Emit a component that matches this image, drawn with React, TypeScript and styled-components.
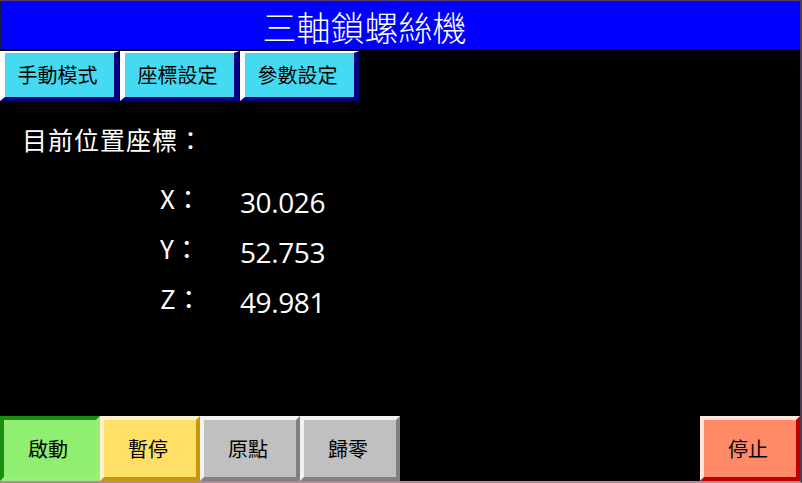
import React from "react";
import styled, { createGlobalStyle } from "styled-components";

const Global = createGlobalStyle`
  html, body { margin: 0; padding: 0; background: #000; }
  body { font-family: "Noto Sans CJK TC", "Noto Sans", sans-serif; }
`;

const CJK = `"Noto Sans CJK TC", "Noto Sans CJK SC", sans-serif`;

const Screen = styled.div`
  width: 802px;
  height: 483px;
  box-sizing: border-box;
  background: #000;
  border-top: 1px solid #5a3a60;
  border-right: 2px solid #4a3e4e;
  border-bottom: 2px solid #b48a98;
  display: flex;
  flex-direction: column;
  overflow: hidden;
`;

const Header = styled.header`
  height: 48px;
  background: #0000ff;
  color: #fff;
  font-family: ${CJK};
  font-size: 34px;
  font-weight: 300;
  line-height: 48px;
  text-align: center;
  padding: 2px 72px 0 0;
  box-sizing: border-box;
  margin-bottom: 2px;
  border-left: 1px solid #1a1a40;
`;

const TabRow = styled.nav`
  display: flex;
  gap: 1px;
  height: 50px;
`;

const Tab = styled.button`
  width: 119px;
  height: 50px;
  box-sizing: border-box;
  background: #44daf2;
  border-style: solid;
  border-width: 2px 5px 4px 5px;
  border-color: #ffffff #000080 #000080 #ffffff;
  font-family: ${CJK};
  font-size: 20px;
  color: #000;
  padding: 0 4px 0 0;
  line-height: 1;
`;

const Content = styled.main`
  flex: 1;
  padding: 24px 0 0 22px;
  color: #fff;
`;

const Caption = styled.div`
  font-family: ${CJK};
  font-size: 25px;
  line-height: 28px;
  letter-spacing: 1px;
`;

const Coords = styled.div`
  display: grid;
  grid-template-columns: 80px auto;
  grid-auto-rows: 50px;
  margin: 22px 0 0 138px;
  align-items: center;
`;

const Axis = styled.div`
  font-family: ${CJK};
  font-size: 26px;
  line-height: 1;
  margin-top: -5px;
`;

const Value = styled.div`
  font-family: "Open Sans", "Noto Sans", sans-serif;
  font-size: 28px;
  line-height: 1;
  letter-spacing: -0.4px;
  margin-top: 3px;
`;

const BottomBar = styled.footer`
  display: flex;
  height: 65px;
`;

type Tone = { face: string; light: string; dark: string; pressed?: boolean };

const ActionButton = styled.button<{ $tone: Tone; $push?: boolean }>`
  width: 100px;
  height: 65px;
  box-sizing: border-box;
  background: ${(p) => p.$tone.face};
  border-style: solid;
  border-width: 4px;
  border-color: ${(p) =>
    p.$tone.pressed
      ? `${p.$tone.dark} ${p.$tone.light} ${p.$tone.light} ${p.$tone.dark}`
      : `${p.$tone.light} ${p.$tone.dark} ${p.$tone.dark} ${p.$tone.light}`};
  margin-left: ${(p) => (p.$push ? "auto" : "0")};
  font-family: ${CJK};
  font-size: 20px;
  color: #000;
  padding: 0 4px 0 0;
  line-height: 1;
`;

const green: Tone = { face: "#90ee70", light: "#98f078", dark: "#1a8c10", pressed: true };
const yellow: Tone = { face: "#ffe066", light: "#fff3cf", dark: "#c8960e" };
const gray: Tone = { face: "#c0c0c0", light: "#f2f2f2", dark: "#808080" };
const red: Tone = { face: "#ff8a68", light: "#ffe6dc", dark: "#c00000" };

const coords = [
  { axis: "X", value: "30.026" },
  { axis: "Y", value: "52.753" },
  { axis: "Z", value: "49.981" },
];

export default function App() {
  return (
    <>
      <Global />
      <Screen>
        <Header>三軸鎖螺絲機</Header>
        <TabRow>
          <Tab>手動模式</Tab>
          <Tab>座標設定</Tab>
          <Tab>參數設定</Tab>
        </TabRow>
        <Content>
          <Caption>目前位置座標：</Caption>
          <Coords>
            {coords.map((c) => (
              <React.Fragment key={c.axis}>
                <Axis>{c.axis}：</Axis>
                <Value>{c.value}</Value>
              </React.Fragment>
            ))}
          </Coords>
        </Content>
        <BottomBar>
          <ActionButton $tone={green}>啟動</ActionButton>
          <ActionButton $tone={yellow}>暫停</ActionButton>
          <ActionButton $tone={gray}>原點</ActionButton>
          <ActionButton $tone={gray}>歸零</ActionButton>
          <ActionButton $tone={red} $push>停止</ActionButton>
        </BottomBar>
      </Screen>
    </>
  );
}
